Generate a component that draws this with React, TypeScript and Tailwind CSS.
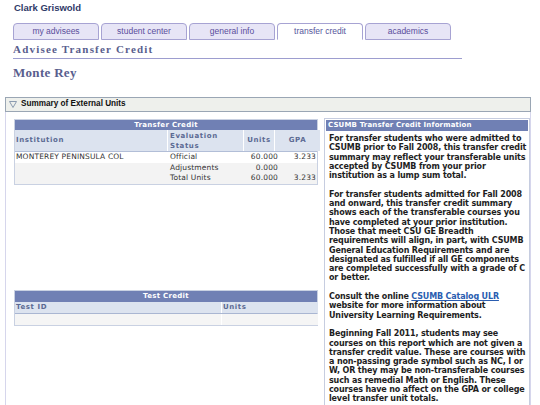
import React from "react";

const tabs = ["my advisees", "student center", "general info", "transfer credit", "academics"];

function Tab({ label, active }: { label: string; active: boolean }) {
  return (
    <div
      className={`flex h-[17px] w-[86px] items-center justify-center rounded-t-[4px] border border-[#a7a3d3] text-[8.5px] ${
        active ? "border-b-white bg-white text-[#56579c]" : "bg-[#e7e5f6] text-[#5a4e9c]"
      }`}
    >
      {label}
    </div>
  );
}

function TriangleIcon() {
  return (
    <svg width="8" height="7" viewBox="0 0 8 7" className="shrink-0">
      <path d="M0.5 0.5 H7.5 L4 6.5 Z" fill="none" stroke="#8b9bb0" strokeWidth="1" />
    </svg>
  );
}

const headCell = "font-bold text-[7px] tracking-[0.6px] text-[#5b6a93]";
const dataCell = "text-[7.5px] tracking-[0.15px] text-[#333]";

function TransferTable() {
  return (
    <div className="w-[304px] border border-[#c9d1e2] bg-white">
      <div className="flex h-[10px] items-center justify-center bg-[#7080b4] text-[7px] font-bold tracking-[0.3px] text-white">
        Transfer Credit
      </div>
      <div className="grid h-[22px] grid-cols-[152px_75px_30px_45px] gap-x-px border-b border-[#b2bed7] bg-white">
        <div className={`flex items-center bg-[#dce3ef] pl-[1px] ${headCell}`}>Institution</div>
        <div className={`flex flex-col justify-center bg-[#dce3ef] pl-[2px] leading-[10px] ${headCell}`}>
          <span>Evaluation</span>
          <span>Status</span>
        </div>
        <div className={`flex items-center justify-center bg-[#dce3ef] ${headCell}`}>Units</div>
        <div className={`flex items-center justify-center bg-[#dce3ef] ${headCell}`}>GPA</div>
      </div>
      {[
        { inst: "MONTEREY PENINSULA COL", status: "Official", units: "60.000", gpa: "3.233", bg: "bg-white" },
        { inst: "", status: "Adjustments", units: "0.000", gpa: "", bg: "bg-[#f3f3f3]" },
        { inst: "", status: "Total Units", units: "60.000", gpa: "3.233", bg: "bg-[#f3f3f3]" },
      ].map((r, i) => (
        <div key={i} className={`grid h-[10.5px] grid-cols-[152px_76px_35px_39px] items-center leading-[10px] ${r.bg}`}>
          <div className={`pl-[1px] ${dataCell}`}>{r.inst}</div>
          <div className={`pl-[3px] ${dataCell}`}>{r.status}</div>
          <div className={`text-right ${dataCell}`}>{r.units}</div>
          <div className={`pr-[1px] text-right ${dataCell}`}>{r.gpa}</div>
        </div>
      ))}
    </div>
  );
}

function TestTable() {
  return (
    <div className="mt-[105px] w-[304px] border border-[#c9d1e2] bg-white">
      <div className="flex h-[11px] items-center justify-center bg-[#7080b4] text-[7px] font-bold tracking-[0.3px] text-white">
        Test Credit
      </div>
      <div className="grid h-[12px] grid-cols-[206px_96px] gap-x-px border-b border-[#a9b6d2] bg-white">
        <div className={`flex items-center bg-[#dce3ef] pl-[1px] ${headCell}`}>Test ID</div>
        <div className={`flex items-center bg-[#dce3ef] pl-[1px] ${headCell}`}>Units</div>
      </div>
      <div className="grid h-[11px] grid-cols-[206px_96px] gap-x-px bg-white">
        <div className="bg-[#f5f5f5]" />
        <div className="bg-[#f5f5f5]" />
      </div>
    </div>
  );
}

function InfoPanel() {
  return (
    <div className="h-[300px] w-[206px] border border-[#c6cde0] bg-white px-px pt-px">
      <div className="flex h-[11px] items-center bg-[#7080b4] pl-[2px] text-[7px] font-bold tracking-[0.15px] text-white">
        CSUMB Transfer Credit Information
      </div>
      <div className="w-[205px] pl-[3px] pt-[3px] text-[8px] font-bold leading-[9.3px] tracking-[-0.15px] text-[#1e1e1e]">
        <p>
          For transfer students who were admitted to CSUMB prior to Fall 2008, this transfer credit summary may
          reflect your transferable units accepted by CSUMB from your prior institution as a lump sum total.
        </p>
        <p className="mt-[9.3px]">
          For transfer students admitted for Fall 2008 and onward, this transfer credit summary shows each of the
          transferable courses you have completed at your prior institution. Those that meet CSU GE Breadth
          requirements will align, in part, with CSUMB General Education Requirements and are designated as
          fulfilled if all GE components are completed successfully with a grade of C or better.
        </p>
        <p className="mt-[9.3px]">
          Consult the online <span className="text-[#2a5db0] underline">CSUMB Catalog ULR</span> website for more
          information about University Learning Requirements.
        </p>
        <p className="mt-[9.3px]">
          Beginning Fall 2011, students may see courses on this report which are not given a transfer credit value.
          These are courses with a non-passing grade symbol such as NC, I or W, OR they may be non-transferable
          courses such as remedial Math or English. These courses have no affect on the GPA or college level
          transfer unit totals.
        </p>
      </div>
    </div>
  );
}

export default function App() {
  return (
    <div className="relative h-[405px] w-[540px] overflow-hidden bg-white font-['Liberation_Sans',Arial,sans-serif]">
      <div className="pl-[14px] pt-[2px] text-[9.5px] font-bold leading-[11px] text-[#2f3a68]">Clark Griswold</div>

      <div className="ml-[13px] mt-[10px] flex gap-[2px]">
        {tabs.map((t) => (
          <Tab key={t} label={t} active={t === "transfer credit"} />
        ))}
      </div>

      <div className="ml-[13px] h-[19px] w-[449px] border-b border-[#9d9dcf] pt-[4px] font-['Liberation_Serif',serif] text-[11px] font-bold leading-[11px] tracking-[1.2px] text-[#595e8e]">
        Advisee Transfer Credit
      </div>

      <div className="ml-[13px] h-[38px] pt-[7px] font-['Liberation_Serif',serif] text-[13px] font-bold leading-[13px] tracking-[0.3px] text-[#595e8e]">
        Monte Rey
      </div>

      <div className="ml-[5px] w-[526px]">
        <div className="flex h-[15px] items-center gap-[4px] border border-[#9aa6b4] bg-[#eef0ec] pl-[3px] text-[8.2px] font-bold text-[#111]">
          <TriangleIcon />
          <span>Summary of External Units</span>
        </div>
        <div className="flex h-[300px] gap-[6px] border-x border-[#d6d6ec] pl-[8px] pt-[6px]">
          <div className="pt-px font-['DejaVu_Sans',Verdana,sans-serif]">
            <TransferTable />
            <TestTable />
          </div>
          <div className="font-['DejaVu_Sans',Verdana,sans-serif]">
            <InfoPanel />
          </div>
        </div>
      </div>
    </div>
  );
}
